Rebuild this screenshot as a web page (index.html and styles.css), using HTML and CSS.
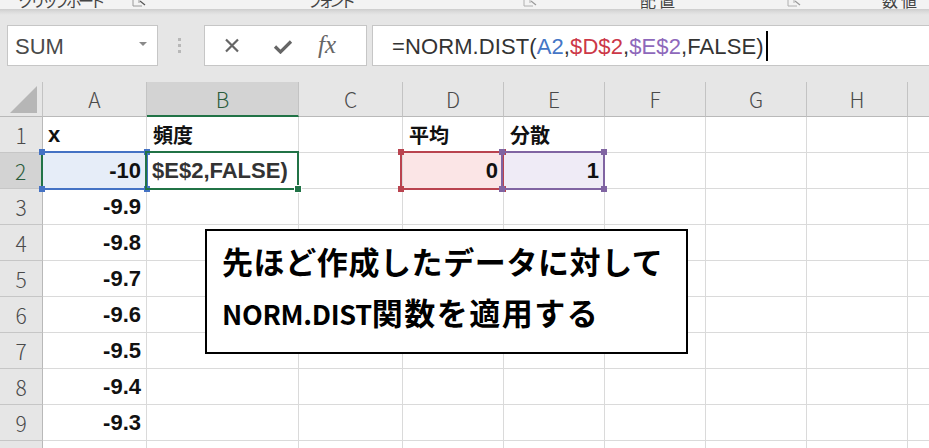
FILE: index.html
```html
<!DOCTYPE html>
<html lang="ja">
<head>
<meta charset="utf-8">
<title>NORM.DIST</title>
<link rel="stylesheet" href="styles.css">
</head>
<body>
<div class="ribbon">
  <span class="rlbl r1">クリップボード</span>
  <span class="launch l1"><svg width="18" height="9" viewBox="0 0 18 9"><path d="M3 0 V6 H12 M9 0 V3" fill="none" stroke="#9a9a9a" stroke-width="1"/><path d="M10 1 L15 5" stroke="#555" stroke-width="1.2"/></svg></span>
  <span class="rlbl r2">フォント</span>
  <span class="launch l2"><svg width="18" height="9" viewBox="0 0 18 9"><path d="M3 0 V6 H12 M9 0 V3" fill="none" stroke="#b0b0b0" stroke-width="1"/><path d="M10 1 L15 5" stroke="#9a9a9a" stroke-width="1.2"/></svg></span>
  <span class="rlbl r3">配置</span>
  <span class="launch l3"><svg width="18" height="9" viewBox="0 0 18 9"><path d="M3 0 V6 H12 M9 0 V3" fill="none" stroke="#b0b0b0" stroke-width="1"/><path d="M10 1 L15 5" stroke="#9a9a9a" stroke-width="1.2"/></svg></span>
  <span class="rlbl r4">数値</span>
</div>

<div class="toolbar">
  <div class="namebox">
    <span class="name">SUM</span>
    <svg class="dd" width="8" height="5" viewBox="0 0 8 5"><path d="M0 0 H8 L4 4 Z" fill="#8a8a8a"/></svg>
  </div>
  <div class="dots"><i></i><i></i><i></i></div>
  <div class="btnbox">
    <svg class="ic-x" width="16" height="15" viewBox="0 0 16 15"><path d="M2 1.5 L14 13.5 M14 1.5 L2 13.5" stroke="#666" stroke-width="2.2" fill="none"/></svg>
    <svg class="ic-ok" width="20" height="14" viewBox="0 0 20 14"><path d="M2 6.5 L7.5 12 L18 1.5" stroke="#666" stroke-width="3.2" fill="none"/></svg>
    <span class="fx">fx</span>
  </div>
  <div class="formula">
    <span>=NORM.DIST(</span><span class="ref-a">A2</span><span>,</span><span class="ref-d">$D$2</span><span>,</span><span class="ref-e">$E$2</span><span>,FALSE)</span><span class="caret"></span>
  </div>
</div>

<div class="sheet">
  <div class="h corner"><svg width="28" height="27" viewBox="0 0 28 27"><path d="M0 27 L27 0 L27 27 Z" fill="#b6b6b6"/></svg></div>
  <div class="h">A</div>
  <div class="h hsel">B</div>
  <div class="h">C</div>
  <div class="h">D</div>
  <div class="h">E</div>
  <div class="h">F</div>
  <div class="h">G</div>
  <div class="h">H</div>
  <div class="h">I</div>

  <div class="rh">1</div>
  <div class="c">x</div>
  <div class="c jp">頻度</div>
  <div class="c"></div>
  <div class="c jp">平均</div>
  <div class="c jp">分散</div>
  <div class="c"></div><div class="c"></div><div class="c"></div><div class="c"></div>

  <div class="rh rsel">2</div>
  <div class="c num fill-a">-10</div>
  <div class="c edit">$E$2,FALSE)</div>
  <div class="c"></div>
  <div class="c num fill-d">0</div>
  <div class="c num fill-e">1</div>
  <div class="c"></div><div class="c"></div><div class="c"></div><div class="c"></div>

  <div class="rh">3</div>
  <div class="c num">-9.9</div>
  <div class="c"></div><div class="c"></div><div class="c"></div><div class="c"></div><div class="c"></div><div class="c"></div><div class="c"></div><div class="c"></div>

  <div class="rh">4</div>
  <div class="c num">-9.8</div>
  <div class="c"></div><div class="c"></div><div class="c"></div><div class="c"></div><div class="c"></div><div class="c"></div><div class="c"></div><div class="c"></div>

  <div class="rh">5</div>
  <div class="c num">-9.7</div>
  <div class="c"></div><div class="c"></div><div class="c"></div><div class="c"></div><div class="c"></div><div class="c"></div><div class="c"></div><div class="c"></div>

  <div class="rh">6</div>
  <div class="c num">-9.6</div>
  <div class="c"></div><div class="c"></div><div class="c"></div><div class="c"></div><div class="c"></div><div class="c"></div><div class="c"></div><div class="c"></div>

  <div class="rh">7</div>
  <div class="c num">-9.5</div>
  <div class="c"></div><div class="c"></div><div class="c"></div><div class="c"></div><div class="c"></div><div class="c"></div><div class="c"></div><div class="c"></div>

  <div class="rh">8</div>
  <div class="c num">-9.4</div>
  <div class="c"></div><div class="c"></div><div class="c"></div><div class="c"></div><div class="c"></div><div class="c"></div><div class="c"></div><div class="c"></div>

  <div class="rh">9</div>
  <div class="c num">-9.3</div>
  <div class="c"></div><div class="c"></div><div class="c"></div><div class="c"></div><div class="c"></div><div class="c"></div><div class="c"></div><div class="c"></div>

  <div class="rh">10</div>
  <div class="c num">-9.2</div>
  <div class="c"></div><div class="c"></div><div class="c"></div><div class="c"></div><div class="c"></div><div class="c"></div><div class="c"></div><div class="c"></div>

  <div class="sel sel-a"><i class="hd tl"></i><i class="hd tr"></i><i class="hd bl"></i><i class="hd br"></i></div>
  <div class="sel sel-d"><i class="hd tl"></i><i class="hd tr"></i><i class="hd bl"></i><i class="hd br"></i></div>
  <div class="sel sel-e"><i class="hd tl"></i><i class="hd tr"></i><i class="hd bl"></i><i class="hd br"></i></div>
  <div class="sel sel-b"><i class="fh"></i></div>

  <div class="note">
    <div class="line l-one">先ほど作成したデータに対して</div>
    <div class="line l-two"><span class="lat">NORM.DIST</span>関数を適用する</div>
  </div>
</div>
</body>
</html>
```

FILE: styles.css
```css
html, body {
  margin: 0;
  padding: 0;
}
body {
  width: 929px;
  height: 448px;
  overflow: hidden;
  background: #e6e6e6;
  font-family: "Liberation Sans", "Noto Sans CJK JP", sans-serif;
}

/* ribbon strip (cut off at the top of the shot) */
.ribbon {
  height: 9px;
  background: #f3f3f3;
  display: flex;
  align-items: flex-start;
  overflow: hidden;
}
.rlbl {
  display: block;
  white-space: nowrap;
  font-family: "Noto Sans CJK JP", sans-serif;
  font-size: 16px;
  line-height: 16px;
  color: #444;
  margin-top: -8px;
  flex: none;
}
.launch { display: block; flex: none; width: 18px; height: 9px; }
.launch svg { display: block; }
.r1 { margin-left: 18px; width: 79px; letter-spacing: -4px; }
.l1 { margin-left: 33px; }
.r2 { margin-left: 159px; width: 43px; letter-spacing: -5px; }
.l2 { margin-left: 171px; }
.r3 { margin-left: 101px; width: 37px; letter-spacing: 3px; }
.l3 { margin-left: 108px; }
.r4 { margin-left: 79px; width: 35px; letter-spacing: 3px; }

/* formula bar */
.toolbar {
  height: 73px;
  box-sizing: border-box;
  padding-top: 16px;
  display: flex;
  align-items: flex-start;
  background: linear-gradient(#cdcdcd 0px, #dcdcdc 3px, #e6e6e6 6px);
  overflow: hidden;
}
.namebox {
  margin-left: 7px;
  width: 151px;
  height: 41px;
  box-sizing: border-box;
  background: #fff;
  border: 1px solid #c6c6c6;
  display: flex;
  align-items: center;
  justify-content: space-between;
  padding: 2px 10px 0 7px;
  flex: none;
}
.name {
  font-size: 22px;
  color: #4a4a4a;
}
.dd { margin-top: -4px; }
.dots {
  margin-left: 20px;
  width: 4px;
  height: 41px;
  display: flex;
  flex-direction: column;
  justify-content: center;
  gap: 3px;
  flex: none;
}
.dots i {
  display: block;
  width: 3px;
  height: 3px;
  background: #b8b8b8;
}
.btnbox {
  margin-left: 22px;
  width: 163px;
  height: 41px;
  box-sizing: border-box;
  background: #fff;
  border: 1px solid #c6c6c6;
  display: flex;
  align-items: center;
  flex: none;
}
.ic-x { margin-left: 19px; }
.ic-ok { margin-left: 33px; margin-top: 3px; }
.fx {
  margin-left: 25px;
  font-family: "Liberation Serif", serif;
  font-style: italic;
  font-size: 25px;
  color: #666;
  margin-top: -2px;
}
.formula {
  margin-left: 5px;
  margin-right: -4px;
  flex: 1;
  height: 41px;
  box-sizing: border-box;
  background: #fff;
  border: 1px solid #c6c6c6;
  display: flex;
  align-items: center;
  padding: 2px 0 0 19px;
  font-size: 22px;
  color: #333;
  white-space: nowrap;
  letter-spacing: 0.1px;
}
.ref-a { color: #4576c6; }
.ref-d { color: #cc3848; }
.ref-e { color: #8e68bb; }
.caret {
  display: inline-block;
  width: 2px;
  height: 30px;
  background: #000;
  margin-left: 2px;
  margin-top: -1px;
}

/* sheet */
.sheet {
  position: relative;
  display: grid;
  grid-template-columns: 43px 104px 152px 104px 101px 101px 101px 101px 101px 101px;
  grid-template-rows: 35px repeat(10, 36px);
  background: #fff;
  width: 1009px;
}
.h, .rh {
  background: #e6e6e6;
  box-sizing: border-box;
  border-right: 1px solid #c3c3c3;
  border-bottom: 1px solid #b9b9b9;
  display: flex;
  align-items: center;
  justify-content: center;
  font-family: "Noto Sans CJK JP", sans-serif;
  font-weight: 300;
  font-size: 21px;
  color: #4a4a4a;
}
.rh {
  border-bottom: 1px solid #c6c6c6;
  border-right: 1px solid #b9b9b9;
}
.corner {
  align-items: flex-end;
  justify-content: flex-end;
  padding: 0 4px 3px 0;
}
.corner svg { display: block; }
.hsel {
  background: #d3d3d3;
  border-bottom: 2px solid #217346;
  color: #2b5c3c;
}
.rsel {
  background: #d3d3d3;
  border-right: 2px solid #217346;
  color: #2b5c3c;
}
.c {
  box-sizing: border-box;
  border-right: 1px solid #dadada;
  border-bottom: 1px solid #dadada;
  display: flex;
  align-items: center;
  padding: 0 5px;
  font-weight: bold;
  font-size: 22px;
  color: #111;
  white-space: nowrap;
}
.jp {
  font-family: "Noto Sans CJK JP", sans-serif;
  font-size: 20px;
  padding-left: 6px;
}
.num { justify-content: flex-end; }
.edit { color: #333; }
.fill-a { background: #e6edf8; }
.fill-d { background: #fbe5e6; }
.fill-e { background: #efebf6; }

/* selection overlays */
.sel {
  position: absolute;
  top: 69px;
  height: 39px;
  box-sizing: border-box;
  border: 2px solid;
}
.sel-a { left: 41px; width: 107px; border-color: #4472c4; border-left-color: #217346; }
.sel-b { left: 145px; width: 154px; border-color: #217346; }
.sel-d { left: 400px; width: 104px; border-color: #b9434f; }
.sel-e { left: 501px; width: 104px; border-color: #8064a2; }
.hd {
  position: absolute;
  width: 6px;
  height: 6px;
}
.sel-a .hd { background: #4472c4; }
.sel-d .hd { background: #b9434f; }
.sel-e .hd { background: #8064a2; }
.tl { left: -4px; top: -4px; }
.tr { right: -4px; top: -4px; }
.bl { left: -4px; bottom: -4px; }
.br { right: -4px; bottom: -4px; }
.fh {
  position: absolute;
  right: -5px;
  bottom: -5px;
  width: 6px;
  height: 6px;
  background: #217346;
  border: 1px solid #fff;
}

/* callout text box */
.note {
  position: absolute;
  left: 205px;
  top: 147px;
  width: 483px;
  height: 125px;
  box-sizing: border-box;
  border: 2px solid #000;
  background: #fff;
  padding: 4px 0 0 15px;
  font-family: "Noto Sans CJK JP", sans-serif;
  font-weight: bold;
  font-size: 31px;
  color: #000;
}
.line {
  height: 51px;
  line-height: 51px;
  white-space: nowrap;
}
.l-one { letter-spacing: 0.6px; }
.l-two { letter-spacing: 1.5px; }
.lat {
  font-size: 27px;
  letter-spacing: -0.3px;
}
```
